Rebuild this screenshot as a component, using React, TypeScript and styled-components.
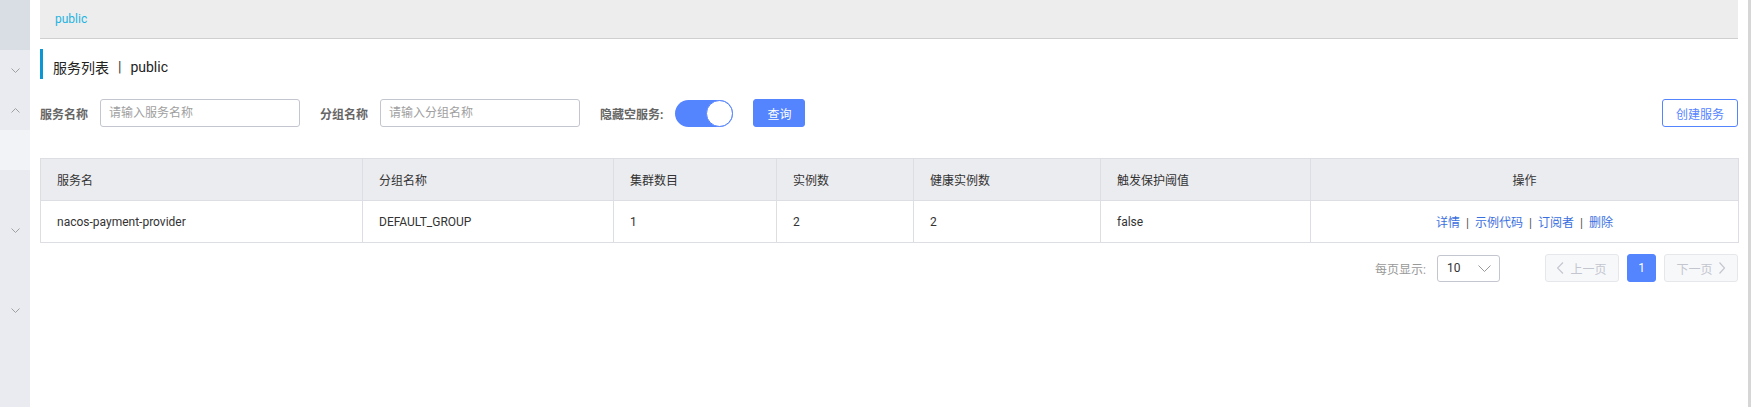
import React from 'react';
import styled, { createGlobalStyle } from 'styled-components';

const Global = createGlobalStyle`
  html, body { margin: 0; padding: 0; background: #fff; }
  body {
    font-family: Roboto, "Noto Sans CJK SC", "Noto Sans", sans-serif;
    font-size: 12px;
    color: #333;
  }
  * { box-sizing: border-box; }
`;

const Shell = styled.div`
  display: flex;
  width: 1752px;
  height: 407px;
  overflow: hidden;
`;

const Sidebar = styled.aside`
  width: 30px;
  flex: none;
  display: flex;
  flex-direction: column;
  background: #e9ebf0;
`;

const tones: Record<string, string> = {
  dark: '#d9dde4',
  base: '#e9ebf0',
  light: '#f2f3f7',
};

const SideItem = styled.div<{ $h: number; $tone?: 'dark' | 'base' | 'light' }>`
  height: ${(p) => p.$h}px;
  flex: none;
  display: flex;
  align-items: center;
  justify-content: center;
  background: ${(p) => tones[p.$tone || 'base']};
`;

const Main = styled.main`
  flex: 1;
  min-width: 0;
  padding: 0 10px;
  display: flex;
  flex-direction: column;
`;

const Rail = styled.div`
  width: 4px;
  flex: none;
  border-left: 3px solid #d6d6d6;
  background: #fff;
`;

const Crumb = styled.div`
  height: 39px;
  background: #ededed;
  border-bottom: 1px solid #cfcfcf;
  display: flex;
  align-items: center;
  padding-left: 15px;
  color: #1fb3df;
  font-size: 12px;
`;

const Title = styled.div`
  margin-top: 10px;
  height: 30px;
  border-left: 3px solid #0d97d2;
  padding: 5px 0 0 10px;
  display: flex;
  align-items: center;
  font-size: 14px;
  color: #222;
`;

const TitleSep = styled.span`
  margin: 0 9px;
  color: #333;
`;

const FilterRow = styled.div`
  margin-top: 20px;
  height: 28px;
  display: flex;
  align-items: center;
  gap: 20px;
`;

const FormItem = styled.div`
  display: flex;
  align-items: center;
  gap: 12px;
`;

const Label = styled.span`
  font-size: 12px;
  font-weight: 700;
  color: #666;
  white-space: nowrap;
`;

const Input = styled.input`
  width: 200px;
  height: 28px;
  border: 1px solid #c4c6cf;
  border-radius: 3px;
  padding: 0 8px;
  font-family: inherit;
  font-size: 12px;
  color: #333;
  outline: none;
  &::placeholder { color: #a0a0a0; }
`;

const Switch = styled.div`
  width: 58px;
  height: 27px;
  border-radius: 14px;
  background: #5584ff;
  display: flex;
  justify-content: flex-end;
  align-items: center;
`;

const Knob = styled.span`
  width: 27px;
  height: 27px;
  border-radius: 50%;
  background: #fff;
  border: 1px solid #5584ff;
`;

const Button = styled.button<{ $variant?: 'primary' | 'outline' }>`
  height: 28px;
  padding: 0 13px;
  border-radius: 3px;
  font-family: inherit;
  font-size: 12px;
  cursor: pointer;
  border: 1px solid #5584ff;
  background: ${(p) => (p.$variant === 'outline' ? '#fff' : '#5584ff')};
  color: ${(p) => (p.$variant === 'outline' ? '#5584ff' : '#fff')};
`;

const Spacer = styled.div`
  flex: 1;
`;

const Table = styled.table`
  margin-top: 31px;
  width: 1698px;
  table-layout: fixed;
  border-collapse: collapse;
  border: 1px solid #dcdee3;
`;

const Th = styled.th<{ $center?: boolean }>`
  height: 42px;
  background: #ebecf0;
  border: 1px solid #dcdee3;
  padding: 0 16px;
  font-weight: 400;
  font-size: 12px;
  color: #333;
  text-align: ${(p) => (p.$center ? 'center' : 'left')};
`;

const Td = styled.td<{ $center?: boolean }>`
  height: 42px;
  border: 1px solid #dcdee3;
  padding: 0 16px;
  font-size: 12px;
  color: #333;
  text-align: ${(p) => (p.$center ? 'center' : 'left')};
  white-space: nowrap;
`;

const Link = styled.a`
  color: #3a6fe0;
  text-decoration: none;
  cursor: pointer;
`;

const LinkSep = styled.span`
  margin: 0 6px;
  color: #555;
`;

const Pager = styled.div`
  margin-top: 11px;
  display: flex;
  justify-content: flex-end;
  align-items: center;
`;

const PagerLabel = styled.span`
  color: #999;
  font-size: 12px;
  margin-right: 11px;
`;

const Select = styled.div`
  width: 63px;
  height: 27px;
  border: 1px solid #c4c6cf;
  border-radius: 3px;
  display: flex;
  align-items: center;
  justify-content: space-between;
  padding: 0 8px 0 9px;
  color: #333;
  font-size: 12px;
  font-weight: 400;
  margin-right: 45px;
`;

const PageButton = styled.button<{ $active?: boolean }>`
  height: 28px;
  min-width: ${(p) => (p.$active ? 29 : 74)}px;
  padding: 0 ${(p) => (p.$active ? 0 : 8)}px;
  border-radius: 3px;
  font-family: inherit;
  font-size: 12px;
  display: inline-flex;
  align-items: center;
  justify-content: center;
  gap: 6px;
  border: 1px solid ${(p) => (p.$active ? '#5584ff' : '#e6e7eb')};
  background: ${(p) => (p.$active ? '#5584ff' : '#f7f8fa')};
  color: ${(p) => (p.$active ? '#fff' : '#c4c6cf')};
  & + & { margin-left: 8px; }
`;

const Chevron = ({ dir, color = '#a0a0a0', w = 9, h = 5 }: { dir: 'down' | 'up' | 'left' | 'right'; color?: string; w?: number; h?: number }) => {
  if (dir === 'left' || dir === 'right') {
    const pts = dir === 'left' ? `${h},0.5 0.5,${w / 2} ${h},${w - 0.5}` : `0.5,0.5 ${h - 0.5},${w / 2} 0.5,${w - 0.5}`;
    return (
      <svg width={h + 1} height={w} viewBox={`0 0 ${h + 1} ${w}`}>
        <polyline points={pts} fill="none" stroke={color} strokeWidth="1.2" />
      </svg>
    );
  }
  const pts = dir === 'down' ? `0.5,0.5 ${w / 2},${h - 0.5} ${w - 0.5},0.5` : `0.5,${h - 0.5} ${w / 2},0.5 ${w - 0.5},${h - 0.5}`;
  return (
    <svg width={w} height={h} viewBox={`0 0 ${w} ${h}`}>
      <polyline points={pts} fill="none" stroke={color} strokeWidth="1" />
    </svg>
  );
};

const columns = [
  { title: '服务名', width: 322 },
  { title: '分组名称', width: 251 },
  { title: '集群数目', width: 163 },
  { title: '实例数', width: 137 },
  { title: '健康实例数', width: 187 },
  { title: '触发保护阈值', width: 210 },
  { title: '操作', width: 428, center: true },
];

const rows = [
  { name: 'nacos-payment-provider', group: 'DEFAULT_GROUP', clusters: 1, instances: 2, healthy: 2, threshold: 'false' },
];

const actions = ['详情', '示例代码', '订阅者', '删除'];

export default function App() {
  return (
    <>
      <Global />
      <Shell>
        <Sidebar>
          <SideItem $h={50} $tone="dark" />
          <SideItem $h={40}><Chevron dir="down" /></SideItem>
          <SideItem $h={40}><Chevron dir="up" /></SideItem>
          <SideItem $h={40} $tone="light" />
          <SideItem $h={40} />
          <SideItem $h={40}><Chevron dir="down" /></SideItem>
          <SideItem $h={40} />
          <SideItem $h={40}><Chevron dir="down" /></SideItem>
        </Sidebar>
        <Main>
          <Crumb>public</Crumb>
          <Title>
            服务列表<TitleSep>|</TitleSep>public
          </Title>
          <FilterRow>
            <FormItem>
              <Label>服务名称</Label>
              <Input placeholder="请输入服务名称" />
            </FormItem>
            <FormItem>
              <Label>分组名称</Label>
              <Input placeholder="请输入分组名称" />
            </FormItem>
            <FormItem>
              <Label>隐藏空服务:</Label>
              <Switch><Knob /></Switch>
            </FormItem>
            <Button $variant="primary">查询</Button>
            <Spacer />
            <Button $variant="outline">创建服务</Button>
          </FilterRow>
          <Table>
            <colgroup>
              {columns.map((c) => (
                <col key={c.title} style={{ width: c.width }} />
              ))}
            </colgroup>
            <thead>
              <tr>
                {columns.map((c) => (
                  <Th key={c.title} $center={c.center}>{c.title}</Th>
                ))}
              </tr>
            </thead>
            <tbody>
              {rows.map((r) => (
                <tr key={r.name}>
                  <Td>{r.name}</Td>
                  <Td>{r.group}</Td>
                  <Td>{r.clusters}</Td>
                  <Td>{r.instances}</Td>
                  <Td>{r.healthy}</Td>
                  <Td>{r.threshold}</Td>
                  <Td $center>
                    {actions.map((a, i) => (
                      <React.Fragment key={a}>
                        {i > 0 && <LinkSep>|</LinkSep>}
                        <Link>{a}</Link>
                      </React.Fragment>
                    ))}
                  </Td>
                </tr>
              ))}
            </tbody>
          </Table>
          <Pager>
            <PagerLabel>每页显示:</PagerLabel>
            <Select>
              <span>10</span>
              <Chevron dir="down" color="#999" w={13} h={7} />
            </Select>
            <PageButton>
              <Chevron dir="left" color="#c4c6cf" w={12} h={6} />
              上一页
            </PageButton>
            <PageButton $active>1</PageButton>
            <PageButton>
              下一页
              <Chevron dir="right" color="#c4c6cf" w={12} h={6} />
            </PageButton>
          </Pager>
        </Main>
        <Rail />
      </Shell>
    </>
  );
}
